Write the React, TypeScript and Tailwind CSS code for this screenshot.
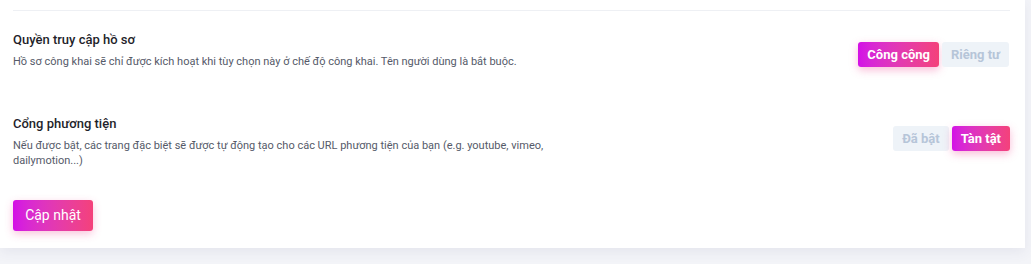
import React from "react";

const font = { fontFamily: "Roboto, 'Noto Sans', sans-serif" };

function Toggle({ left, right, active }: { left: string; right: string; active: "left" | "right" }) {
  const on =
    "h-[25px] px-[9px] rounded-[3px] bg-linear-to-r from-[#d30fe6] to-[#f4417a] text-white text-[13px] font-bold shadow-[0_3px_8px_rgba(240,60,140,0.35)]";
  const off = "h-[25px] px-[9px] rounded-[3px] bg-[#eef3f8] text-[#b6c5d8] text-[13px] font-bold";
  return (
    <div className="flex items-center gap-[3px] shrink-0">
      <button className={active === "left" ? on : off}>{left}</button>
      <button className={active === "right" ? on : off}>{right}</button>
    </div>
  );
}

export default function App() {
  return (
    <div className="w-full h-[264px] bg-[#f3f4f8]" style={font}>
      <div className="w-[1025px] h-[248px] bg-white shadow-[0_4px_12px_rgba(60,70,110,0.08)] px-[13px] pt-[10px]">
        <div className="w-[997px] h-px bg-[#eef0f4]" />
        <div className="flex justify-between items-start w-[997px] mt-[20px]">
          <div>
            <div className="text-[13px] leading-[18px] font-medium text-[#1f1f2b]">Quyền truy cập hồ sơ</div>
            <div className="text-[11px] leading-[15px] mt-[5px] text-[#555a69]">
              Hồ sơ công khai sẽ chỉ được kích hoạt khi tùy chọn này ở chế độ công khai. Tên người dùng là bắt buộc.
            </div>
          </div>
          <div className="mt-[11px] mr-[1px]">
            <Toggle left="Công cộng" right="Riêng tư" active="left" />
          </div>
        </div>
        <div className="flex justify-between items-start w-[997px] mt-[46px]">
          <div className="max-w-[545px]">
            <div className="text-[13px] leading-[18px] font-medium text-[#1f1f2b]">Cổng phương tiện</div>
            <div className="text-[11px] leading-[15px] mt-[5px] text-[#555a69]">
              Nếu được bật, các trang đặc biệt sẽ được tự động tạo cho các URL phương tiện của bạn (e.g. youtube, vimeo,
              dailymotion...)
            </div>
          </div>
          <div className="mt-[11px]">
            <Toggle left="Đã bật" right="Tàn tật" active="right" />
          </div>
        </div>
        <button className="mt-[32px] w-[80px] h-[31px] rounded-[3px] bg-linear-to-r from-[#d30fe6] to-[#f4417a] text-white text-[14px] shadow-[0_3px_8px_rgba(240,60,140,0.3)]">
          Cập nhật
        </button>
      </div>
    </div>
  );
}
